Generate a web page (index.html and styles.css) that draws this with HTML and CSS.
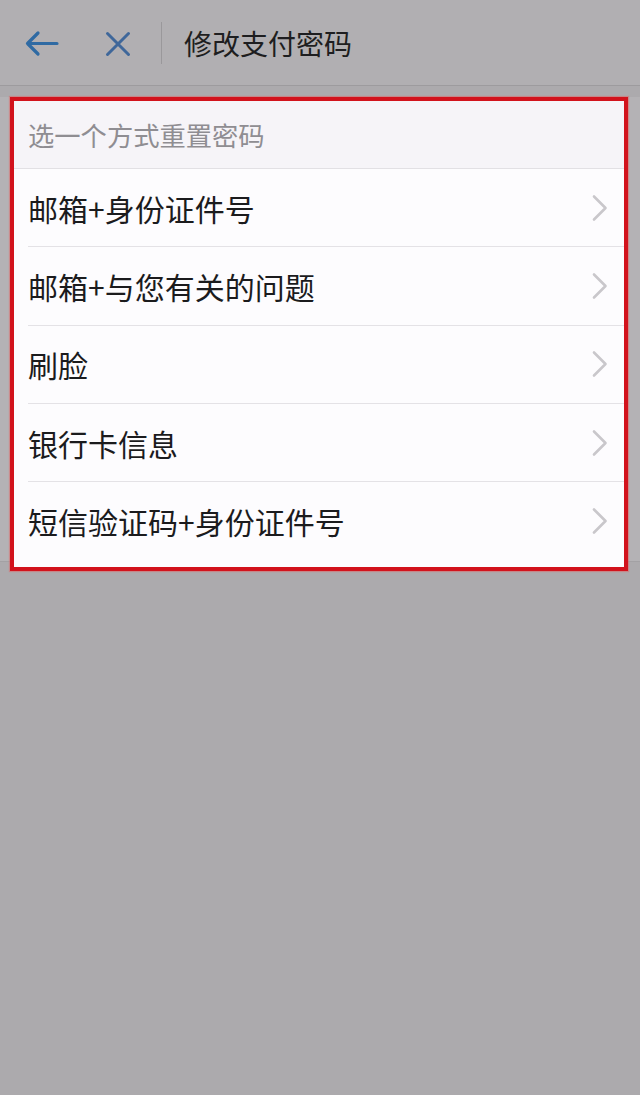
FILE: index.html
```html
<!DOCTYPE html>
<html lang="zh-CN">
<head>
<meta charset="utf-8">
<title>修改支付密码</title>
<link rel="stylesheet" href="styles.css">
</head>
<body>
<header class="topbar">
  <svg class="icon-back" width="36" height="28" viewBox="0 0 36 28" aria-hidden="true">
    <path d="M14 3 L3.5 13.5 L14 24 M3.5 13.5 H33" fill="none" stroke="#2f6aa3" stroke-width="3.2" stroke-linecap="round" stroke-linejoin="round"/>
  </svg>
  <svg class="icon-close" width="26" height="26" viewBox="0 0 26 26" aria-hidden="true">
    <path d="M2.5 2.5 L23.5 23.5 M23.5 2.5 L2.5 23.5" fill="none" stroke="#3f679a" stroke-width="3" stroke-linecap="round"/>
  </svg>
  <span class="divider"></span>
  <h1 class="title">修改支付密码</h1>
</header>
<main class="sheet">
  <section class="highlight">
    <div class="section-head">选一个方式重置密码</div>
    <ul class="options">
      <li class="option"><span class="label">邮箱+身份证件号</span><svg class="chev" width="18" height="28" viewBox="0 0 18 28" aria-hidden="true"><path d="M3 2.5 L14.5 14 L3 25.5" fill="none" stroke="#c9c7cb" stroke-width="2.6" stroke-linecap="round" stroke-linejoin="round"/></svg></li>
      <li class="option"><span class="label">邮箱+与您有关的问题</span><svg class="chev" width="18" height="28" viewBox="0 0 18 28" aria-hidden="true"><path d="M3 2.5 L14.5 14 L3 25.5" fill="none" stroke="#c9c7cb" stroke-width="2.6" stroke-linecap="round" stroke-linejoin="round"/></svg></li>
      <li class="option"><span class="label">刷脸</span><svg class="chev" width="18" height="28" viewBox="0 0 18 28" aria-hidden="true"><path d="M3 2.5 L14.5 14 L3 25.5" fill="none" stroke="#c9c7cb" stroke-width="2.6" stroke-linecap="round" stroke-linejoin="round"/></svg></li>
      <li class="option"><span class="label">银行卡信息</span><svg class="chev" width="18" height="28" viewBox="0 0 18 28" aria-hidden="true"><path d="M3 2.5 L14.5 14 L3 25.5" fill="none" stroke="#c9c7cb" stroke-width="2.6" stroke-linecap="round" stroke-linejoin="round"/></svg></li>
      <li class="option"><span class="label">短信验证码+身份证件号</span><svg class="chev" width="18" height="28" viewBox="0 0 18 28" aria-hidden="true"><path d="M3 2.5 L14.5 14 L3 25.5" fill="none" stroke="#c9c7cb" stroke-width="2.6" stroke-linecap="round" stroke-linejoin="round"/></svg></li>
    </ul>
  </section>
</main>
</body>
</html>
```

FILE: styles.css
```css
* { box-sizing: border-box; }

html, body {
  margin: 0;
  padding: 0;
}

body {
  width: 640px;
  min-height: 1095px;
  background: #acaaad;
  font-family: "Noto Sans CJK SC", "Noto Sans", "Liberation Sans", sans-serif;
  color: #1c1c1e;
}

.topbar {
  height: 86px;
  display: flex;
  align-items: center;
  padding-left: 24px;
  background: #b1afb2;
  border-bottom: 1px solid #9d9b9e;
}

.icon-back {
  display: block;
  flex: none;
  margin-top: 2px;
}

.icon-close {
  display: block;
  flex: none;
  margin-left: 45px;
  margin-top: 2px;
}

.divider {
  width: 1px;
  height: 42px;
  margin-left: 30px;
  background: #9a989b;
}

.title {
  margin: 0 0 0 22px;
  font-size: 28px;
  font-weight: 400;
  color: #1e1e20;
  line-height: 1;
}

.sheet {
  margin-top: 11px;
  height: 465px;
  background: #b4b2b5;
  border-bottom: 1px solid #a3a1a4;
}

.highlight {
  margin: 0 12px 0 10px;
  border: 4px solid #d2121c;
  background: #fdfcfe;
  padding-bottom: 7px;
  box-shadow: 0 0 1px 1px rgba(230, 90, 90, 0.45);
}

.section-head {
  height: 68px;
  display: flex;
  align-items: center;
  padding-left: 14px;
  background: #f6f4f8;
  border-bottom: 1px solid #e2e0e4;
  font-size: 26.3px;
  color: #8f8d92;
}

.options {
  list-style: none;
  margin: 0;
  padding: 0;
}

.option {
  height: 78.3px;
  margin-left: 14px;
  display: flex;
  align-items: center;
  justify-content: space-between;
  padding-right: 15px;
  border-bottom: 1px solid #e4e2e6;
}

.option:last-child {
  border-bottom: 0;
}

.label {
  font-size: 30px;
  color: #1b1b1d;
  line-height: 1;
}

.chev {
  display: block;
  flex: none;
}
```
